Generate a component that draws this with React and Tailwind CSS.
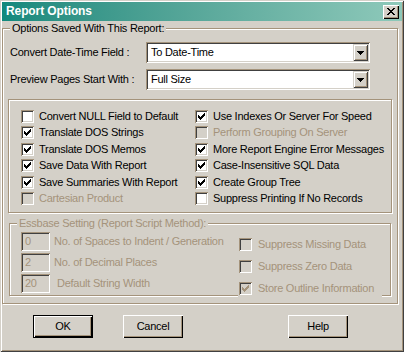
const SUNKEN = 'shadow-[inset_1px_1px_0_#a4937b,inset_-1px_-1px_0_#ffffff,inset_2px_2px_0_#404040,inset_-2px_-2px_0_#d4d0c8]'
const RAISED = 'shadow-[inset_1px_1px_0_#ffffff,inset_-1px_-1px_0_#000000,inset_-2px_-2px_0_#a4937b]'
const ETCHED = 'border border-[#a4937b] shadow-[inset_1px_1px_0_#ffffff,1px_1px_0_#ffffff]'

const CHECK_Y = [5, 6, 7, 6, 5, 4, 3]

function Check({ checked, disabled }) {
  return (
    <span className={`block w-[13px] h-[13px] shrink-0 ${disabled ? 'bg-[#d4d0c8]' : 'bg-white'} ${SUNKEN}`}>
      {checked && (
        <svg width="13" height="13" className="block" shapeRendering="crispEdges" fill={disabled ? '#a4937b' : '#000000'}>
          {CHECK_Y.map((y, i) => (
            <rect key={i} x={3 + i} y={y} width="1" height="3" />
          ))}
        </svg>
      )}
    </span>
  )
}

function Opt({ label, checked, disabled, gap = 'gap-[5px]' }) {
  return (
    <div className={`flex items-start ${gap}`}>
      <Check checked={checked} disabled={disabled} />
      <span className={`leading-[13px] whitespace-nowrap ${disabled ? 'text-[#a4937b]' : ''}`}>{label}</span>
    </div>
  )
}

function Combo({ value }) {
  return (
    <div className={`flex w-[224px] h-[21px] bg-white p-[2px] ${SUNKEN}`}>
      <span className="flex-1 pl-[3px] leading-[17px]">{value}</span>
      <span className="flex w-[15px] h-[17px] items-center justify-center bg-[#d4d0c8] shadow-[inset_1px_1px_0_#d4d0c8,inset_-1px_-1px_0_#404040,inset_2px_2px_0_#ffffff,inset_-2px_-2px_0_#a4937b]">
        <svg width="7" height="4" className="block" shapeRendering="crispEdges" fill="#000000">
          <rect x="0" y="0" width="7" height="1" />
          <rect x="1" y="1" width="5" height="1" />
          <rect x="2" y="2" width="3" height="1" />
          <rect x="3" y="3" width="1" height="1" />
        </svg>
      </span>
    </div>
  )
}

function EditBox({ value }) {
  return (
    <span className={`block w-[29px] h-[19px] shrink-0 bg-[#d4d0c8] pl-[4px] leading-[19px] text-[#a4937b] ${SUNKEN}`}>
      {value}
    </span>
  )
}

const left = [
  { label: 'Convert NULL Field to Default' },
  { label: 'Translate DOS Strings', checked: true },
  { label: 'Translate DOS Memos', checked: true },
  { label: 'Save Data With Report', checked: true },
  { label: 'Save Summaries With Report', checked: true },
  { label: 'Cartesian Product', disabled: true },
]

const right = [
  { label: 'Use Indexes Or Server For Speed', checked: true },
  { label: 'Perform Grouping On Server', disabled: true },
  { label: 'More Report Engine Error Messages', checked: true },
  { label: 'Case-Insensitive SQL Data', checked: true },
  { label: 'Create Group Tree', checked: true },
  { label: 'Suppress Printing If No Records' },
]

export default function App() {
  return (
    <div className="w-[404px] h-[352px] bg-[#d4d0c8] pt-[2px] pl-[2px] pr-[2px] font-['Liberation_Sans',Arial,sans-serif] text-[11px] tracking-[-0.25px] text-black shadow-[inset_1px_1px_0_#d4d0c8,inset_-1px_-1px_0_#404040,inset_2px_2px_0_#ffffff,inset_-2px_-2px_0_#a4937b]">
      {/* Title bar */}
      <div className="flex h-[19px] items-center justify-between pl-[4px] pr-[3px] bg-linear-to-r from-[#11897d] to-[#8ec9ba]">
        <span className="text-[12px] font-bold text-white tracking-[-0.1px] leading-[19px]">Report Options</span>
        <span className={`flex w-[16px] h-[14px] items-center justify-center bg-[#d4d0c8] ${RAISED}`}>
          <svg width="8" height="7" className="block -mt-px" shapeRendering="crispEdges" fill="#000000">
            <rect x="0" y="0" width="2" height="1" />
            <rect x="6" y="0" width="2" height="1" />
            <rect x="1" y="1" width="2" height="1" />
            <rect x="5" y="1" width="2" height="1" />
            <rect x="2" y="2" width="4" height="1" />
            <rect x="3" y="3" width="2" height="1" />
            <rect x="2" y="4" width="4" height="1" />
            <rect x="1" y="5" width="2" height="1" />
            <rect x="5" y="5" width="2" height="1" />
            <rect x="0" y="6" width="2" height="1" />
            <rect x="6" y="6" width="2" height="1" />
          </svg>
        </span>
      </div>

      {/* Options Saved With This Report */}
      <div className={`relative mt-[7px] mr-[4px] h-[276px] ${ETCHED}`}>
        <span className="absolute -top-[7px] left-[7px] px-[2px] bg-[#d4d0c8] leading-[13px] whitespace-nowrap">
          Options Saved With This Report:
        </span>

        <div className="flex h-[21px] items-center pl-[7px] mt-[13px]">
          <span className="w-[136px] shrink-0">Convert Date-Time Field :</span>
          <Combo value="To Date-Time" />
        </div>
        <div className="flex h-[21px] items-center pl-[7px] mt-[6px]">
          <span className="w-[136px] shrink-0">Preview Pages Start With :</span>
          <Combo value="Full Size" />
        </div>

        <div className={`ml-[5px] mt-[9px] w-[384px] h-[114px] ${ETCHED}`}>
          <div className="grid grid-cols-[174px_1fr] grid-rows-[16px_17px_16px_17px_16px_13px] grid-flow-col pl-[12px] pt-[10px]">
            {left.map((o) => <Opt key={o.label} {...o} />)}
            {right.map((o) => <Opt key={o.label} {...o} />)}
          </div>
        </div>

        {/* Essbase */}
        <div className={`relative ml-[6px] mt-[10px] w-[382px] h-[73px] ${ETCHED}`}>
          <span className="absolute -top-[7px] left-[7px] px-[2px] bg-[#d4d0c8] leading-[13px] whitespace-nowrap text-[#a4937b]">
            Essbase Setting (Report Script Method):
          </span>
          <div className="flex">
            <div className="flex w-[228px] shrink-0 flex-col gap-[2px] pl-[11px] pt-[8px] text-[#a4937b]">
              <div className="flex items-center gap-[4px]">
                <EditBox value="0" />
                <span className="whitespace-nowrap">No. of Spaces to Indent / Generation</span>
              </div>
              <div className="flex items-center gap-[4px]">
                <EditBox value="2" />
                <span className="whitespace-nowrap">No. of Decimal Places</span>
              </div>
              <div className="flex items-center gap-[4px]">
                <EditBox value="20" />
                <span className="ml-[3px] whitespace-nowrap">Default String Width</span>
              </div>
            </div>
            <div className="flex flex-col gap-[9px] pt-[14px]">
              <div className="pl-[1px]">
                <Opt label="Suppress Missing Data" disabled gap="gap-[6px]" />
              </div>
              <div className="pl-[1px]">
                <Opt label="Suppress Zero Data" disabled gap="gap-[6px]" />
              </div>
              <div className="w-[144px] pl-[1px] pb-[3px] bg-[#d4d0c8]">
                <Opt label="Store Outline Information" checked disabled gap="gap-[6px]" />
              </div>
            </div>
          </div>
        </div>
      </div>

      {/* Buttons */}
      <div className="flex mt-[11px]">
        <button className={`ml-[31px] w-[60px] h-[23px] border border-black bg-[#d4d0c8] shadow-[inset_1px_1px_0_#ffffff,inset_-1px_-1px_0_#000000,inset_-2px_-2px_0_#a4937b]`}>
          OK
        </button>
        <button className={`ml-[30px] w-[60px] h-[23px] bg-[#d4d0c8] ${RAISED}`}>Cancel</button>
        <button className={`ml-[105px] w-[60px] h-[23px] bg-[#d4d0c8] ${RAISED}`}>Help</button>
      </div>
    </div>
  )
}
